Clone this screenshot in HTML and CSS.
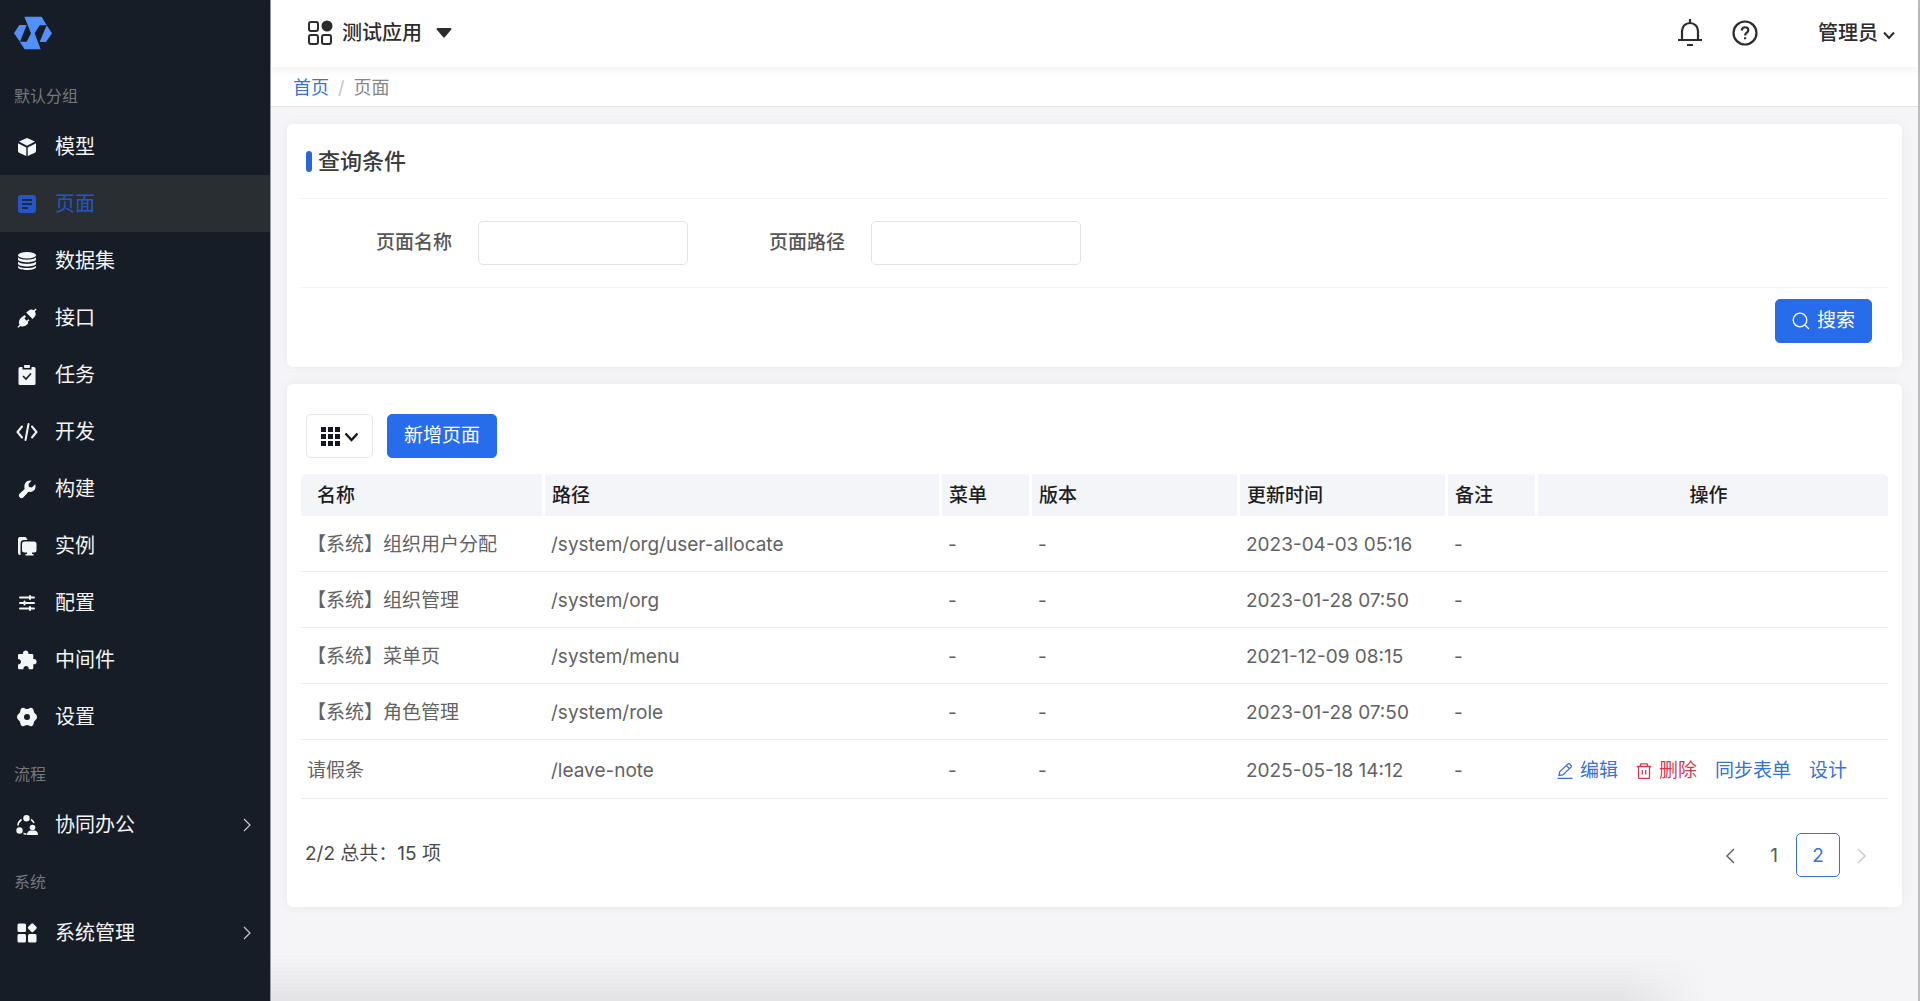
FILE: index.html
```html
<!DOCTYPE html>
<html lang="zh-CN">
<head>
    <meta charset="UTF-8">
    <meta name="viewport" content="width=device-width, initial-scale=1">
    <title>页面</title>
    <link rel="stylesheet" href="styles.css">
</head>
<body>
    <div class="layout">
        <aside class="sidebar">
            <a class="logo" href="#" aria-label="首页">
                <svg width="38" height="34" viewBox="0 0 114 102" fill="#5290fb">
                    <path d="M31 2h52l15 26H77L62 52l18 48H32L17 77h21l13-25z"/>
                    <path d="M16 27h22L18 77 0 52z"/>
                    <path d="M98 28l16 24-18 26H77z"/>
                </svg>
            </a>

            <h2 class="group">默认分组</h2>
            <nav class="menu">
                <a class="item" href="#">
                    <svg class="icon" viewBox="0 0 20 20"><path d="M10 1l8 3.600-8 4.200-8-4.200zM1 6.200l8.300 4.300V19L2.600 16Q1 15.300 1 14zM19 6.200l-8.300 4.300V19l6.700-3Q19 15.300 19 14z"/></svg>
                    <span>模型</span>
                </a>
                <a class="item active" href="#">
                    <svg class="icon" viewBox="0 0 20 20"><rect x="1" y="1" width="18" height="18" rx="3"/><path class="cut" d="M5 6h10M5 10h10M5 14h6"/></svg>
                    <span>页面</span>
                </a>
                <a class="item" href="#">
                    <svg class="icon" viewBox="0 0 20 20"><ellipse cx="10" cy="4.200" rx="9" ry="3.200"/><path d="M1 6.300c2 3.200 16 3.200 18 0v2.200c-1 3.600-17 3.600-18 0zM1 10.500c2 3.200 16 3.200 18 0v2.200c-1 3.600-17 3.600-18 0zM1 14.700c2 3.200 16 3.200 18 0v1.500c-1 3.700-17 3.700-18 0z"/></svg>
                    <span>数据集</span>
                </a>
                <a class="item" href="#">
                    <svg class="icon" viewBox="0 0 20 20"><path d="M19.500 1.500L18.700.6l-2 1.700C14 .4 11.700 2 9.200 4.600l6.300 6.300c3-2.500 4.200-4.900 2.300-7.500zM7.600 6.900L6.300 8.200 4.800 9C2 11.500 1 14.300 2.600 16.800L.4 18.900l.9.900 2.200-1.900c2.500 1.500 5 .5 7.600-2.300l-.2-1.900 1.500-1.500-1-1-1.700 1.600-2.300-2.300 1.600-1.700z"/></svg>
                    <span>接口</span>
                </a>
                <a class="item" href="#">
                    <svg class="icon" viewBox="0 0 20 20"><path d="M3 2h2.500v2.500h9V2H17q1.500 0 1.500 1.500v15Q18.500 20 17 20H3q-1.500 0-1.500-1.500v-15Q1.500 2 3 2z"/><rect x="7" y="0" width="6" height="3" rx="1"/><path class="cut" d="M6 11l3 3 5-5.500"/></svg>
                    <span>任务</span>
                </a>
                <a class="item" href="#">
                    <svg class="icon wide line" viewBox="0 0 22 20"><path d="M6 4.500L1.500 10 6 15.500M16 4.500l4.500 5.500-4.500 5.500M12.500 2l-3 16"/></svg>
                    <span>开发</span>
                </a>
                <a class="item" href="#">
                    <svg class="icon" viewBox="0 0 20 20"><path d="M14.600 1.600L11.500 5l.4 3 3 .5 3.300-3.200c1.600 5.100-2.200 8.500-6.700 7.500l-5 5.400c-2.600 2.700-6.300-.9-3.800-3.600l5-4.600C6.300 5 9.500.5 14.600 1.600z"/></svg>
                    <span>构建</span>
                </a>
                <a class="item" href="#">
                    <svg class="icon" viewBox="0 0 20 20"><path d="M3 1h5q1 0 2 1.500h-1q1.500 0 1.500 1.500H7Q3.500 4 3.500 8v11H3q-2 0-2-2V3q0-2 2-2z"/><rect x="5" y="5.500" width="14.500" height="11" rx="2.500"/><path d="M10 16h5v2h1.500v1.500H8.500V18H10z"/></svg>
                    <span>实例</span>
                </a>
                <a class="item" href="#">
                    <svg class="icon line" viewBox="0 0 20 20"><path d="M3 4.500h14M3 10h14M3 15.500h14M13 3v3M7.500 8.500v3M13 14v3"/></svg>
                    <span>配置</span>
                </a>
                <a class="item" href="#">
                    <svg class="icon" viewBox="0 0 20 20"><path d="M6 4C5.300-.6 12-.6 11.400 4H15q1.300 0 1.300 1.300V9c4.500-.6 4.500 6 0 5.300V18q0 1.300-1.300 1.300h-3.200c.2-4.400-5.600-4.400-5.400 0H2.300Q1 19.300 1 18v-3.500c4-.3 4-5.200 0-5.500V5.300Q1 4 2.300 4z"/></svg>
                    <span>中间件</span>
                </a>
                <a class="item" href="#">
                    <svg class="icon" viewBox="0 0 20 20"><path fill-rule="evenodd" d="M5 1q1.500-.6 3 .4 2 1.200 4 0 1.500-1 3-.4 1.500.8 1.600 2.500.1 2.200 1.900 3.400Q20 8 20 10t-1.500 3.100q-1.800 1.200-1.900 3.400-.1 1.700-1.600 2.500-1.500.6-3-.4-2-1.200-4 0-1.500 1-3 .4-1.500-.8-1.600-2.500-.1-2.200-1.900-3.400Q0 12 0 10t1.500-3.100q1.800-1.200 1.900-3.400Q3.500 1.800 5 1zM10 7a3 3 0 1 0 0 6 3 3 0 1 0 0-6z"/></svg>
                    <span>设置</span>
                </a>
            </nav>

            <h2 class="group">流程</h2>
            <nav class="menu">
                <a class="item" href="#">
                    <svg class="icon wide" viewBox="0 0 22 20"><circle cx="10.500" cy="3.200" r="3.200"/><circle cx="3.500" cy="15.500" r="3.200"/><circle cx="16.500" cy="12.500" r="2.800"/><path d="M11 20q0-4.500 4-4.500h3q4 0 4 4.500z"/><path class="arc" d="M5.500 4.500Q2 7 2 10.500M15 4.500q2 1.200 3 3.500M7.500 18.500l3 .7"/></svg>
                    <span>协同办公</span>
                    <svg class="arrow" width="8" height="14" viewBox="0 0 8 14"><path d="M1 1l6 6-6 6"/></svg>
                </a>
            </nav>

            <h2 class="group">系统</h2>
            <nav class="menu">
                <a class="item" href="#">
                    <svg class="icon" viewBox="0 0 20 20"><rect x=".5" y=".5" width="8.500" height="8.500" rx="1.500"/><rect x=".5" y="11" width="8.500" height="8.500" rx="1.500"/><rect x="11" y="11" width="8.500" height="8.500" rx="1.500"/><path d="M14.300.7q1-1 2 0l3 3q1 1 0 2l-3 3q-1 1-2 0l-3-3q-1-1 0-2z"/></svg>
                    <span>系统管理</span>
                    <svg class="arrow" width="8" height="14" viewBox="0 0 8 14"><path d="M1 1l6 6-6 6"/></svg>
                </a>
            </nav>
        </aside>

        <div class="main">
            <header class="header">
                <button class="app-switch" type="button">
                    <svg width="26" height="26" viewBox="0 0 26 26" fill="none" stroke="#2c2c2c" stroke-width="2"><rect x="2" y="2" width="9" height="9" rx="2"/><rect x="2" y="15" width="9" height="9" rx="2"/><rect x="15" y="15" width="9" height="9" rx="2"/><circle cx="20" cy="6" r="4.500" fill="#2c2c2c"/></svg>
                    <span>测试应用</span>
                    <svg class="caret" width="16" height="10" viewBox="0 0 16 10"><path fill="#2c2c2c" d="M1.500 0h13q1.500.2.800 1.500L9 9q-1 1-2 0L.7 1.500Q0 .2 1.500 0z"/></svg>
                </button>
                <div class="tools">
                    <button type="button" aria-label="通知">
                        <svg width="26" height="28" viewBox="0 0 26 28" fill="none" stroke="#2c2c2c" stroke-width="2.200"><path d="M13 0v4M5 21V12a8 8 0 0 1 16 0v9M1 21h24M10 26h6"/></svg>
                    </button>
                    <button type="button" aria-label="帮助">
                        <svg width="26" height="26" viewBox="0 0 26 26" fill="none" stroke="#2c2c2c" stroke-width="2.200"><circle cx="13" cy="13" r="11.500"/><path d="M9.800 10.500c0-4.300 6.500-4.300 6.500-.3 0 2.500-3.200 2.400-3.200 5.300M13.100 17.300v2"/></svg>
                    </button>
                    <button class="user" type="button">
                        <span>管理员</span>
                        <svg class="user-arrow" width="12" height="9" viewBox="0 0 12 9" fill="none" stroke="#2c2c2c" stroke-width="2"><path d="M1 1.500l5 5.500 5-5.500"/></svg>
                    </button>
                </div>
            </header>

            <nav class="breadcrumb">
                <a href="#">首页</a>
                <span class="sep">/</span>
                <span>页面</span>
            </nav>

            <main class="content">
                <form class="card query">
                    <h1 class="title">查询条件</h1>
                    <div class="fields">
                        <div class="field">
                            <label for="page-name">页面名称</label>
                            <input id="page-name" type="text">
                        </div>
                        <div class="field">
                            <label for="page-path">页面路径</label>
                            <input id="page-path" type="text">
                        </div>
                    </div>
                    <div class="submit">
                        <button class="btn primary" type="button">
                            <svg width="18" height="18" viewBox="0 0 18 18" fill="none" stroke="#fff" stroke-width="1.300"><circle cx="8" cy="8" r="6.800"/><path d="M13 13l4 4"/></svg>
                            搜索
                        </button>
                    </div>
                </form>

                <section class="card list">
                    <div class="toolbar">
                        <button class="btn" type="button" aria-label="列设置">
                            <svg width="37" height="20" viewBox="0 0 37 20" fill="#14171f"><path d="M0 1h5v5H0zM7 1h5v5H7zM14 1h5v5h-5zM0 8h5v5H0zM7 8h5v5H7zM14 8h5v5h-5zM0 15h5v5H0zM7 15h5v5H7zM14 15h5v5h-5z"/><path d="M24.500 7.500l6 6.500 6-6.500" fill="none" stroke="#14171f" stroke-width="2.400"/></svg>
                        </button>
                        <button class="btn primary" type="button">新增页面</button>
                    </div>

                    <table class="table">
                        <colgroup>
                            <col class="col-name">
                            <col>
                            <col class="col-short">
                            <col class="col-mid">
                            <col class="col-mid">
                            <col class="col-short">
                            <col class="col-action">
                        </colgroup>
                        <thead>
                            <tr>
                                <th>名称</th>
                                <th>路径</th>
                                <th>菜单</th>
                                <th>版本</th>
                                <th>更新时间</th>
                                <th>备注</th>
                                <th>操作</th>
                            </tr>
                        </thead>
                        <tbody>
                            <tr>
                                <td>【系统】组织用户分配</td>
                                <td>/system/org/user-allocate</td>
                                <td>-</td>
                                <td>-</td>
                                <td>2023-04-03 05:16</td>
                                <td>-</td>
                                <td></td>
                            </tr>
                            <tr>
                                <td>【系统】组织管理</td>
                                <td>/system/org</td>
                                <td>-</td>
                                <td>-</td>
                                <td>2023-01-28 07:50</td>
                                <td>-</td>
                                <td></td>
                            </tr>
                            <tr>
                                <td>【系统】菜单页</td>
                                <td>/system/menu</td>
                                <td>-</td>
                                <td>-</td>
                                <td>2021-12-09 08:15</td>
                                <td>-</td>
                                <td></td>
                            </tr>
                            <tr>
                                <td>【系统】角色管理</td>
                                <td>/system/role</td>
                                <td>-</td>
                                <td>-</td>
                                <td>2023-01-28 07:50</td>
                                <td>-</td>
                                <td></td>
                            </tr>
                            <tr>
                                <td>请假条</td>
                                <td>/leave-note</td>
                                <td>-</td>
                                <td>-</td>
                                <td>2025-05-18 14:12</td>
                                <td>-</td>
                                <td>
                                    <div class="actions">
                                        <a href="#">
                                            <svg width="16" height="16" viewBox="0 0 16 16"><path d="M.5 15.500h15M2 12.500l.7-3.700L11 .9q.8-.6 1.600.1l1.500 1.500q.7.800 0 1.600L5.800 12zM9.500 2.700l2.700 2.700"/></svg>
                                            编辑
                                        </a>
                                        <a class="danger" href="#">
                                            <svg width="16" height="16" viewBox="0 0 16 16"><path d="M.8 3.500h14.400M4.500 3.500v-2q0-.7.700-.7h5.600q.7 0 .7.700v2M2.500 3.500v11q0 1 1 1h9q1 0 1-1v-11M6.300 7v4.500M9.700 7v4.500"/></svg>
                                            删除
                                        </a>
                                        <a href="#">同步表单</a>
                                        <a href="#">设计</a>
                                    </div>
                                </td>
                            </tr>
                        </tbody>
                    </table>

                    <div class="footer">
                        <span class="total">2/2 总共：15 项</span>
                        <div class="pager">
                            <button type="button" aria-label="上一页"><svg width="10" height="16" viewBox="0 0 10 16"><path d="M9 1L2 8l7 7"/></svg></button>
                            <button type="button">1</button>
                            <button class="current" type="button">2</button>
                            <button type="button" aria-label="下一页" disabled><svg width="10" height="16" viewBox="0 0 10 16"><path d="M1 1l7 7-7 7"/></svg></button>
                        </div>
                    </div>
                </section>
            </main>
        </div>
    </div>
</body>
</html>
```
FILE: styles.css
```css
* {
    box-sizing: border-box;
}
body {
    margin: 0;
    font-family: Inter, "Noto Sans CJK SC", sans-serif;
    font-size: 19px;
    line-height: 28px;
    color: #4a4a4a;
    background-color: #f5f5f8;
}
a {
    color: #3572d6;
    text-decoration: none;
}
button {
    padding: 0;
    border: none;
    background: none;
    font: inherit;
    color: inherit;
    cursor: pointer;
}
svg {
    display: block;
    flex: none;
}
.layout {
    display: flex;
    min-height: 100vh;
}

/* sidebar */
.sidebar {
    flex: none;
    width: 271px;
    border-right: 1px solid #9a9ca3;
    background-color: #161d26;
}
.logo {
    display: flex;
    align-items: center;
    height: 67px;
    padding: 0 14px 2px;
}
.group {
    height: 51px;
    margin: 0;
    padding: 4px 14px 0;
    font-size: 16px;
    font-weight: 400;
    line-height: 50px;
    color: #74787c;
}
.item {
    display: flex;
    align-items: center;
    height: 57px;
    padding: 0 19px 0 17px;
    font-size: 20px;
    color: #f4f5f6;
}
.item span {
    flex: 1;
    margin-left: 18px;
}
.item.active {
    background-color: #282e31;
    color: #2456c8;
}
.icon {
    width: 20px;
    height: 20px;
    fill: currentColor;
}
.icon.wide {
    width: 22px;
    margin: 0 -1px;
}
.icon.line {
    fill: none;
    stroke: currentColor;
    stroke-width: 2;
    stroke-linecap: round;
}
.cut {
    fill: none;
    stroke: #161d26;
    stroke-width: 1.6;
}
.arc {
    fill: none;
    stroke: currentColor;
    stroke-width: 1.6;
}
.arrow {
    fill: none;
    stroke: #c9cbce;
    stroke-width: 1.2;
}

/* top bar */
.main {
    display: flex;
    flex-direction: column;
    flex: 1;
    min-width: 0;
    border-right: 2px solid #bcbcbe;
}
.header {
    display: flex;
    align-items: center;
    justify-content: space-between;
    height: 67px;
    padding: 0 23px 2px 36px;
    background-color: #fff;
    box-shadow: 0 2px 10px rgba(0, 0, 0, 0.07);
    z-index: 1;
    font-size: 20px;
    font-weight: 500;
    color: #2c2c2c;
}
.app-switch,
.tools,
.user {
    display: flex;
    align-items: center;
}
.app-switch {
    gap: 9px;
}
.caret {
    margin-left: 5px;
}
.tools {
    gap: 29px;
}
.user {
    gap: 5px;
    margin-left: 31px;
}
.user-arrow {
    margin-top: 6px;
}
.breadcrumb {
    display: flex;
    align-items: center;
    gap: 9px;
    height: 40px;
    padding: 2px 22px 0;
    border-bottom: 1px solid #e3e3e6;
    background-color: #fff;
    font-size: 18px;
    color: #858585;
}
.sep {
    color: #c4c4c4;
}

/* cards */
.content {
    display: flex;
    flex-direction: column;
    gap: 17px;
    padding: 17px 16px;
}
.card {
    padding: 0 14px;
    border-radius: 6px;
    background-color: #fff;
    box-shadow: 0 0 12px rgba(0, 0, 0, 0.05);
}
.title {
    display: flex;
    align-items: center;
    gap: 6px;
    height: 75px;
    margin: 0;
    padding: 0 5px;
    border-bottom: 1px solid #f3f3f4;
    font-size: 22px;
    font-weight: 500;
    color: #3c3c3c;
}
.title::before {
    content: "";
    width: 6px;
    height: 21px;
    border-radius: 3px;
    background-color: #2a66d9;
}
.fields {
    display: flex;
    flex-wrap: wrap;
    gap: 22px 81px;
    padding: 22px 75px;
    border-bottom: 1px solid #f3f3f4;
}
.field {
    display: flex;
    align-items: center;
    gap: 26px;
    font-weight: 500;
    color: #555;
}
.field input {
    width: 210px;
    height: 44px;
    padding: 0 12px;
    border: 1px solid #e3e3e3;
    border-radius: 5px;
    background-color: #fff;
    font: inherit;
}
.submit {
    display: flex;
    justify-content: flex-end;
    padding: 11px 16px 24px;
}
.btn {
    display: flex;
    align-items: center;
    gap: 7px;
    height: 44px;
    padding: 0 14px;
    border: 1px solid #e6e6e8;
    border-radius: 5px;
}
.btn.primary {
    padding: 0 16px;
    border-color: #276ceb;
    background-color: #276ceb;
    color: #fff;
}
.toolbar {
    display: flex;
    gap: 14px;
    padding: 30px 5px 16px;
}

/* table */
.table {
    width: 100%;
    table-layout: fixed;
    border-spacing: 0;
}
.col-name {
    width: 244px;
}
.col-short {
    width: 90px;
}
.col-mid {
    width: 208px;
}
.col-action {
    width: 350px;
}
.table th {
    height: 42px;
    padding: 2px 7px 0;
    border-right: 3px solid #fff;
    background-color: #f3f5f9;
    font-weight: 500;
    text-align: left;
    color: #1d1d1f;
}
.table th:first-child {
    padding-left: 16px;
    border-top-left-radius: 5px;
}
.table th:last-child {
    padding-right: 16px;
    border-right: none;
    border-top-right-radius: 5px;
    text-align: center;
}
.table td {
    height: 56px;
    padding: 3px 6px 0;
    border-bottom: 1px solid #ededf0;
    color: #626262;
    white-space: nowrap;
}
.table tr:last-child td {
    height: 59px;
}
.actions {
    display: flex;
    gap: 18px;
    padding-left: 13px;
}
.actions a {
    display: flex;
    align-items: center;
    gap: 7px;
}
.actions svg {
    fill: none;
    stroke: currentColor;
    stroke-width: 1.3;
}
.actions .danger {
    color: #d8384f;
}

/* pagination */
.footer {
    display: flex;
    justify-content: space-between;
    padding: 34px 4px 30px;
}
.total {
    line-height: 42px;
}
.pager {
    display: flex;
}
.pager button {
    display: flex;
    align-items: center;
    justify-content: center;
    width: 44px;
    height: 44px;
    padding-top: 2px;
    border: 1px solid transparent;
    border-radius: 5px;
    color: #5a5a5a;
}
.pager .current {
    border-color: #3572d6;
    color: #3572d6;
}
.pager button:disabled {
    color: #c8c8c8;
}
.pager svg {
    fill: none;
    stroke: currentColor;
    stroke-width: 1.4;
}

/* soft shade along the bottom edge */
.main::after {
    content: "";
    flex: 1;
    max-height: 48px;
    margin: auto 210px 0 0;
    background: linear-gradient(to right, transparent 94%, #f5f5f8), linear-gradient(to bottom, #f5f5f8, #e3e3e5);
}
```
